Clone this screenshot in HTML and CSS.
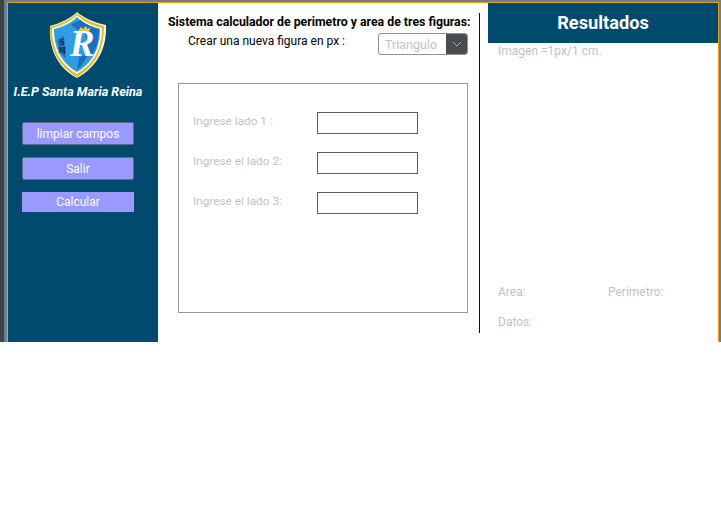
FILE: index.html
```html
<!DOCTYPE html>
<html lang="es">
<head>
<meta charset="utf-8">
<title>Sistema calculador</title>
<link rel="stylesheet" href="styles.css">
</head>
<body>
<div class="desk">
<div class="frame">
<div class="window">
  <aside class="side">
    <svg class="logo" viewBox="0 0 58 66" width="58" height="66" aria-hidden="true">
      <path d="M28 0 C22 6 12 11 1 14 C0 34 6 54 28 66 C50 54 58 34 57 13 C46 11 35 6 28 0Z" fill="#f4f4ec"/>
      <path d="M28 1 C22 7 12 12 1 15 C1 34 7 53 28 65 C49 53 55 34 55 14 C45 12 35 7 28 1Z" fill="#e2c025"/>
      <path d="M28 3 C22 9 13 14 3 16 C3 34 9 51 28 62 C47 51 53 34 53 16 C43 14 34 9 28 3Z" fill="#fdfbe8"/>
      <path d="M28 5 C22 11 14 15 5 17 C5 34 11 50 28 60 C45 50 51 34 51 17 C42 15 34 11 28 5Z" fill="#2e9de4"/>
      <path d="M31 8 C36 12 43 15 50 17 C50 28 47 38 42 44 L36 22 L22 13 C25 11 28 9 31 8Z" fill="#1e6fbb"/>
      <path d="M8 28 L15 24 L17 46 L12 42Z" fill="#1e6fbb"/>
      <path d="M30 45 L40 42 L32 54 L28 58Z" fill="#1e6fbb"/>
      <path d="M29 20 h11 l1.500 -5 l-2.800 2 l-2.200 -3 l-2.200 3 l-2.800 -2Z" fill="#e9c93a"/>
      <text x="33" y="44" class="logo-r">R</text>
      <text x="13" y="33" class="logo-s">S</text>
      <text x="13" y="41" class="logo-s">M</text>
    </svg>
    <div class="school">I.E.P Santa Maria Reina</div>
    <button class="btn">limpiar campos</button>
    <button class="btn">Salir</button>
    <button class="btn flat">Calcular</button>
  </aside>
  <main class="center">
    <h1 class="title">Sistema calculador de perimetro y area de tres figuras:</h1>
    <div class="create">
      <span class="create-label">Crear una nueva figura en px :</span>
      <div class="combo">
        <span class="combo-text">Triangulo</span>
        <span class="combo-arrow">
          <svg viewBox="0 0 10 6" width="10" height="6" aria-hidden="true"><path d="M1 1l4 4 4-4" fill="none" stroke="#a9abad" stroke-width="1"/></svg>
        </span>
      </div>
    </div>
    <section class="panel">
      <div class="row"><span class="muted row-label">Ingrese lado 1 :</span><span class="field"></span></div>
      <div class="row"><span class="muted row-label">Ingrese el lado 2:</span><span class="field"></span></div>
      <div class="row"><span class="muted row-label">Ingrese el lado 3:</span><span class="field"></span></div>
    </section>
  </main>
  <div class="divider"></div>
  <section class="results">
    <header class="results-head">Resultados</header>
    <div class="results-body">
      <div class="muted">Imagen =1px/1 cm.</div>
      <div class="stats">
        <div class="stats-row"><span class="muted stat">Area:</span><span class="muted">Perimetro:</span></div>
        <div class="muted">Datos:</div>
      </div>
    </div>
  </section>
</div>
</div>
</div>
</body>
</html>
```
FILE: styles.css
```css
* { box-sizing: border-box; }
html, body { margin: 0; padding: 0; background: #fff; }
body { width: 721px; height: 525px; overflow: hidden; font-family: Roboto, "Noto Sans", sans-serif; }
.desk { width: 721px; height: 342px; border-left: 4px solid #3f4144; }
.frame { height: 342px; border-style: solid; border-color: #6a7f92; border-width: 2px 2px 0 3px; }
.window {
  display: flex;
  height: 340px;
  background: #fff;
  border-style: solid;
  border-color: #f39c12;
  border-width: 1px 1px 0 1px;
}
.side {
  width: 150px;
  background: #004a6e;
  display: flex;
  flex-direction: column;
  align-items: center;
  padding: 9px 10px 0 0;
}
.logo { display: block; flex: none; }
.logo-r { font: italic bold 37px "Liberation Serif", serif; fill: #fff; text-anchor: middle; }
.logo-s { font: bold 8px "Liberation Serif", serif; fill: #10202c; text-anchor: middle; }
.school { margin-top: 5px; font: italic bold 12.600px Roboto, sans-serif; line-height: 17px; color: #fff; white-space: nowrap; }
.btn {
  flex: none;
  width: 112px;
  height: 23px;
  margin-top: 12px;
  padding: 0;
  background: #9999ff;
  border: 1px solid #666a80;
  border-radius: 2px;
  color: #fff;
  font: 12px Roboto, sans-serif;
}
.school + .btn { margin-top: 22px; }
.flat { height: 20px; border: 0; border-radius: 0; }
.center { width: 321px; padding: 11px 0 0 10px; }
.title { margin: 0; font-size: 12.300px; font-weight: 700; line-height: 17px; color: #000; white-space: nowrap; }
.create { display: flex; align-items: flex-start; margin-top: 2px; }
.create-label { margin-left: 20px; width: 190px; font-size: 12px; line-height: 17px; color: #000; }
.combo { display: flex; width: 90px; height: 22px; border: 1px solid #8f9193; border-radius: 3px; overflow: hidden; }
.combo-text { flex: 1; padding: 1px 0 0 6px; font-size: 12.500px; line-height: 20px; color: #c3bfc7; }
.combo-arrow { width: 21px; background: #4a4d50; display: flex; align-items: center; justify-content: center; }
.panel { width: 290px; height: 230px; margin: 28px 0 0 10px; border: 1px solid #999; padding: 28px 0 0 14px; }
.row { display: flex; height: 22px; margin-bottom: 18px; }
.field { width: 101px; height: 22px; border: 1px solid #5c5c5c; background: #fff; }
.muted { font-size: 12px; line-height: 17px; color: #c3bfc7; }
.row-label.muted { width: 124px; padding-top: 1px; font-size: 11.800px; }
.divider { width: 1px; height: 320px; margin: 10px 8px 0 0; background: #000080; }
.results { flex: 1; display: flex; flex-direction: column; }
.results-head { flex: none; height: 40px; background: #004a6e; color: #fff; font-size: 18.200px; font-weight: 700; line-height: 40px; text-align: center; }
.results-body { flex: 1; display: flex; flex-direction: column; justify-content: space-between; padding: 0 0 11px 10px; }
.stats-row { display: flex; margin-bottom: 13px; }
.stat { width: 110px; }
```
